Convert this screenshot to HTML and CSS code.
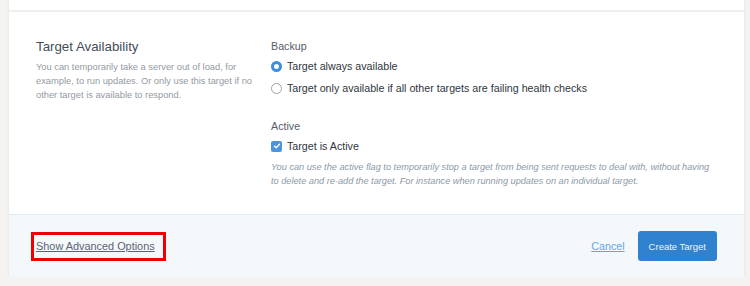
FILE: index.html
```html
<!DOCTYPE html>
<html lang="en">
<head>
    <meta charset="UTF-8">
    <title>Create Target</title>
    <link rel="stylesheet" href="styles.css">
</head>
<body>
<div class="card">
    <div class="card-prev"></div>

    <div class="section">
        <div class="section-info">
            <h3>Target Availability</h3>
            <p>You can temporarily take a server out of load, for example, to run updates. Or only use this target if no other target is available to respond.</p>
        </div>
        <div class="section-fields">
            <div class="field">
                <div class="field-label">Backup</div>
                <label class="choice">
                    <span class="radio checked"></span>
                    Target always available
                </label>
                <label class="choice">
                    <span class="radio"></span>
                    Target only available if all other targets are failing health checks
                </label>
            </div>
            <div class="field">
                <div class="field-label">Active</div>
                <label class="choice">
                    <span class="checkbox">
                        <svg width="8" height="8" viewBox="0 0 8 8"><path d="M1.5 4.2 L3.2 5.8 L6.5 2.2" fill="none" stroke="#fff" stroke-width="1.4" stroke-linecap="round" stroke-linejoin="round"/></svg>
                    </span>
                    Target is Active
                </label>
                <p class="help">You can use the active flag to temporarily stop a target from being sent requests to deal with, without having to delete and re-add the target. For instance when running updates on an individual target.</p>
            </div>
        </div>
    </div>

    <div class="card-footer">
        <a href="#" class="advanced">Show Advanced Options</a>
        <div class="actions">
            <a href="#" class="cancel">Cancel</a>
            <button type="button" class="btn-primary">Create Target</button>
        </div>
    </div>
</div>
</body>
</html>
```

FILE: styles.css
```css
body {
    margin: 0;
    background: #f4f3f1;
    font-family: "Liberation Sans", Arial, sans-serif;
    color: #3d4852;
}
/* Card */
.card {
    margin-left: 9px;
    width: 735px;
    background: #fff;
    box-shadow: 0 1px 3px rgba(0, 0, 0, 0.08);
}
.card-prev {
    height: 10px;
}
.section {
    display: flex;
    border-top: 2px solid #efefef;
    padding: 27px 27px 26px 27px;
}
.section-info {
    width: 235px;
    flex-shrink: 0;
}
.section-info h3 {
    margin: 0 0 5px;
    font-size: 13.3px;
    line-height: 16px;
    font-weight: normal;
    color: #454d5a;
}
.section-info p {
    width: 225px;
    margin: 0;
    font-size: 9.3px;
    line-height: 14px;
    color: #939aa3;
}
.section-fields {
    flex: 1;
}
/* margins collapse with the last row's bottom margin */
.field + .field {
    margin-top: 23px;
}
.field-label {
    font-size: 10.7px;
    line-height: 14px;
    color: #555d68;
    margin-bottom: 5px;
}
.choice {
    display: flex;
    align-items: center;
    gap: 5px;
    font-size: 10.7px;
    color: #2f3640;
    height: 16px;
    margin-bottom: 6px;
}
.radio {
    width: 11px;
    height: 11px;
    border: 1px solid #9ea3a9;
    border-radius: 50%;
    box-sizing: border-box;
}
.radio.checked {
    border: 3.5px solid #3d8ee0;
}
.checkbox {
    width: 11px;
    height: 11px;
    border-radius: 2px;
    background: #4a94de;
    display: flex;
    align-items: center;
    justify-content: center;
}
.help {
    margin: 0;
    font-size: 9.2px;
    line-height: 14px;
    font-style: italic;
    color: #8c99a8;
}
/* Footer */
.card-footer {
    display: flex;
    align-items: center;
    justify-content: space-between;
    border-top: 1px solid #e4e9ef;
    background: #f5f8fb;
    padding: 16px 27px 16px 22px;
}
.advanced {
    font-size: 10.9px;
    line-height: 13px;
    color: #5a6473;
    border: 3px solid #f00000;
    padding: 5px 8px 5px 2px;
}
.actions {
    display: flex;
    align-items: center;
    gap: 13px;
}
.cancel {
    font-size: 10.7px;
    color: #62a7e8;
}
.btn-primary {
    font-family: inherit;
    font-size: 9.5px;
    color: #eef4fb;
    background: #3182ce;
    border: none;
    border-radius: 3px;
    padding: 0 11px;
    height: 30px;
}
```
